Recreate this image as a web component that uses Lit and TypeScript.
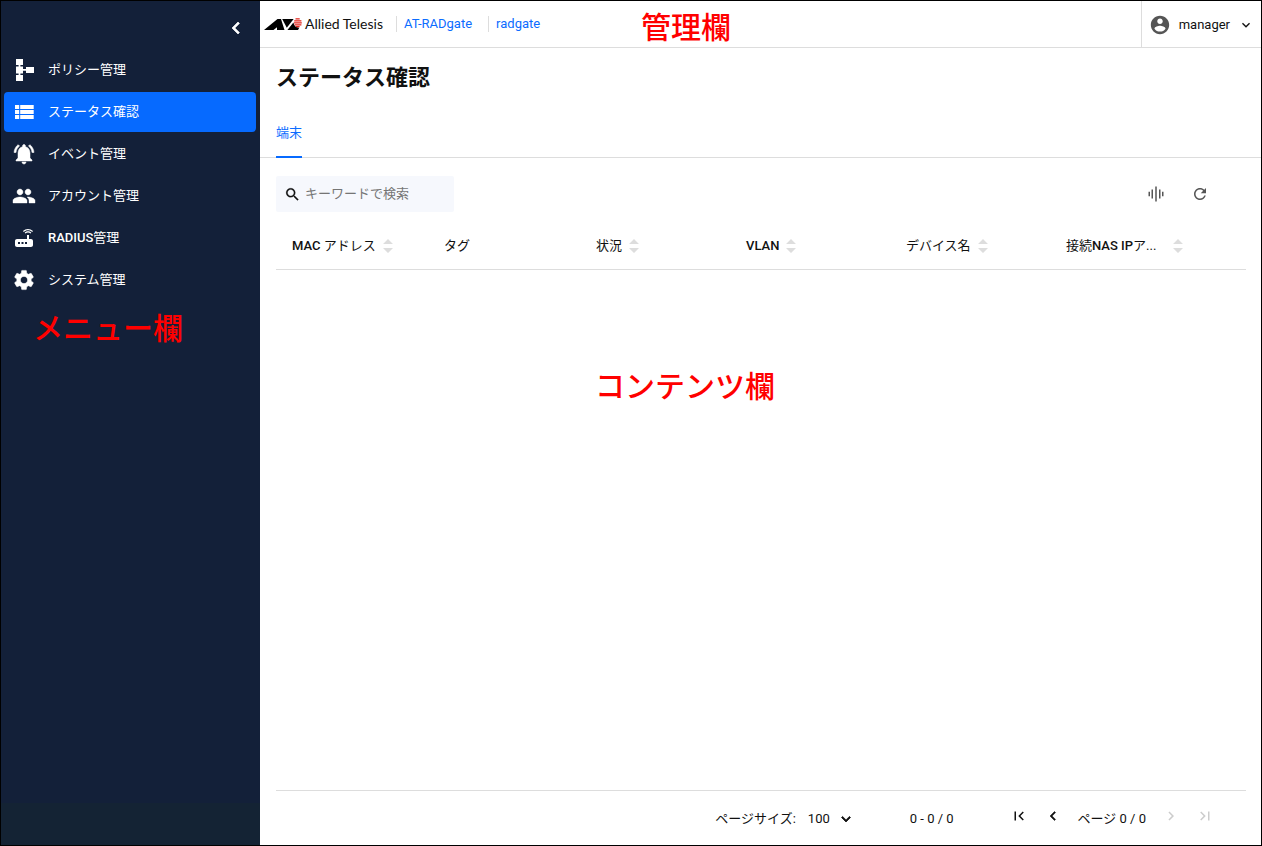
import { LitElement, html, css, svg, nothing } from "lit";
import { customElement, property, state } from "lit/decorators.js";
import { classMap } from "lit/directives/class-map.js";

const glyphs = {
  policy: svg`<path d="M4 1h7v6H8.400v1.500H11v2.500h3V9h8v6h-8v-2.200h-3V15.500H8.400V17H11v6H4v-6h2.600v-1.500H4v-7h2.600V7H4z"/>`,
  list: svg`<path d="M3 5h4.200v4H3zM3 10h4.200v4H3zM3 15h4.200v4H3zM8.200 5h13.500v4H8.200zM8.200 10h13.500v4H8.200zM8.200 15h13.500v4H8.200z"/>`,
  bell: svg`<path stroke="currentColor" stroke-width=".5" d="M7.580 4.080L6.150 2.650C3.750 4.480 2.170 7.300 2.030 10.500h2c.15-2.650 1.510-4.970 3.550-6.420zm12.390 6.420h2c-.15-3.200-1.730-6.020-4.120-7.850l-1.420 1.430c2.020 1.450 3.390 3.770 3.540 6.420zM18 11c0-3.070-1.640-5.640-4.500-6.320V4c0-.83-.67-1.500-1.500-1.500s-1.500.67-1.500 1.500v.68C7.630 5.360 6 7.920 6 11v5l-2 2v1h16v-1l-2-2v-5zm-6 11c.14 0 .27-.01.4-.04.65-.14 1.180-.58 1.440-1.180.1-.24.15-.5.15-.78h-4c.01 1.100.9 2 2.010 2z"/>`,
  people: svg`<path stroke="currentColor" stroke-width=".4" d="M16 11c1.660 0 2.990-1.340 2.990-3S17.660 5 16 5c-1.660 0-3 1.340-3 3s1.340 3 3 3zm-8 0c1.660 0 2.990-1.340 2.990-3S9.660 5 8 5C6.340 5 5 6.340 5 8s1.340 3 3 3zm0 2c-2.330 0-7 1.170-7 3.500V19h14v-2.500c0-2.330-4.670-3.500-7-3.500zm8 0c-.29 0-.62.02-.97.05 1.160.84 1.970 1.970 1.970 3.450V19h6v-2.500c0-2.330-4.670-3.500-7-3.500z"/>`,
  router: svg`<path d="M20.200 5.900l.8-.8C19.600 3.700 17.800 3 16 3s-3.600.7-5 2.100l.8.8C13 4.800 14.500 4.200 16 4.200s3 .6 4.200 1.700zm-.9.8c-.9-.9-2.100-1.400-3.300-1.400s-2.400.5-3.300 1.400l.8.8c.7-.7 1.600-1 2.500-1 .9 0 1.800.3 2.500 1l.8-.8zM19 13h-2V9h-2v4H5c-1.100 0-2 .9-2 2v4c0 1.100.9 2 2 2h14c1.100 0 2-.9 2-2v-4c0-1.100-.9-2-2-2zM8 18H6v-2h2v2zm3.500 0h-2v-2h2v2zm3.500 0h-2v-2h2v2z"/>`,
  gear: svg`<path stroke="currentColor" stroke-width=".5" d="M19.140 12.940c.04-.3.06-.61.06-.94 0-.32-.02-.64-.07-.94l2.030-1.580c.18-.14.23-.41.12-.61l-1.920-3.320c-.12-.22-.37-.29-.59-.22l-2.390.96c-.5-.38-1.030-.7-1.620-.94l-.36-2.540c-.04-.24-.24-.41-.48-.41h-3.840c-.24 0-.43.17-.47.41l-.36 2.540c-.59.24-1.130.57-1.620.94l-2.390-.96c-.22-.08-.47 0-.59.22L2.740 8.870c-.12.21-.08.47.12.61l2.030 1.580c-.05.3-.09.63-.09.94s.02.64.07.94l-2.030 1.580c-.18.14-.23.41-.12.61l1.920 3.320c.12.22.37.29.59.22l2.390-.96c.5.38 1.030.7 1.620.94l.36 2.540c.05.24.24.41.48.41h3.840c.24 0 .44-.17.47-.41l.36-2.540c.59-.24 1.130-.56 1.620-.94l2.390.96c.22.08.47 0 .59-.22l1.920-3.320c.12-.22.07-.47-.12-.61l-2.010-1.580zM12 15.600c-1.980 0-3.600-1.620-3.600-3.600s1.620-3.600 3.600-3.600 3.600 1.620 3.600 3.600-1.620 3.600-3.600 3.600z"/>`,
  left: svg`<path stroke="currentColor" stroke-width=".7" d="M15.410 7.410L14 6l-6 6 6 6 1.410-1.410L10.830 12z"/>`,
  right: svg`<path d="M8.590 16.590L10 18l6-6-6-6-1.410 1.410L13.170 12z"/>`,
  first: svg`<path d="M18.410 16.590L13.820 12l4.590-4.590L17 6l-6 6 6 6zM6 6h2v12H6z"/>`,
  last: svg`<path d="M5.590 7.410L10.180 12l-4.590 4.590L7 18l6-6-6-6zM16 6h2v12h-2z"/>`,
  down: svg`<path d="M7.410 8.590L12 13.170l4.590-4.580L18 10l-6 6-6-6z"/>`,
  pick: svg`<path stroke="currentColor" stroke-width="1" d="M7.410 8.590L12 13.170l4.590-4.580L18 10l-6 6-6-6z"/>`,
  user: svg`<path d="M12 2C6.480 2 2 6.480 2 12s4.480 10 10 10 10-4.480 10-10S17.520 2 12 2zm0 3c1.660 0 3 1.340 3 3s-1.340 3-3 3-3-1.340-3-3 1.340-3 3-3zm0 14.200c-2.500 0-4.710-1.280-6-3.220.03-1.990 4-3.080 6-3.080 1.990 0 5.970 1.090 6 3.080-1.290 1.940-3.500 3.220-6 3.220z"/>`,
  search: svg`<path stroke="currentColor" stroke-width=".3" d="M15.500 14h-.79l-.28-.27C15.410 12.590 16 11.110 16 9.500 16 5.910 13.090 3 9.500 3S3 5.910 3 9.500 5.910 16 9.500 16c1.610 0 3.090-.59 4.230-1.570l.27.28v.79l5 4.990L20.490 19l-4.990-5zm-6 0C7.010 14 5 11.990 5 9.500S7.010 5 9.500 5 14 7.010 14 9.500 11.990 14 9.500 14z"/>`,
  columns: svg`<path d="M2 9h2v6H2zM6 6h2v12H6zM11 2h2v20h-2zM16 6h2v12h-2zM20 9h2v6h-2z"/>`,
  refresh: svg`<path d="M17.650 6.350C16.200 4.900 14.210 4 12 4c-4.420 0-7.990 3.580-7.990 8s3.570 8 7.990 8c3.730 0 6.840-2.550 7.730-6h-2.080c-.82 2.330-3.040 4-5.650 4-3.310 0-6-2.690-6-6s2.690-6 6-6c1.660 0 3.140.69 4.220 1.780L13 11h7V4l-2.350 2.350z"/>`,
};
type Glyph = keyof typeof glyphs;

@customElement("ui-icon")
class UiIcon extends LitElement {
  @property() name: Glyph = "list";
  static styles = css`
    :host { display: inline-flex; flex: none; width: 24px; height: 24px; }
    .glyph { width: 100%; height: 100%; fill: currentColor; display: block; }
  `;
  render() {
    return html`<svg class="glyph" viewBox="0 0 24 24" aria-hidden="true">${glyphs[this.name]}</svg>`;
  }
}

@customElement("brand-logo")
class BrandLogo extends LitElement {
  static styles = css`
    :host { display: flex; align-items: center; height: 20px; width: 120px; }
    .mark { width: 38px; height: 14px; flex: none; }
    .name { font: 400 14px/20px Lato, "Liberation Sans", sans-serif; color: #111; padding-left: 3px; white-space: nowrap; }
  `;
  render() {
    return html`
      <svg class="mark" viewBox="0 0 38 14" aria-hidden="true">
        <path fill="#000" d="M0 13 13.500 2H17L20.500 13H13V10.300L9.500 13z"/>
        <path fill="#000" d="M18.200 2H29.600L22.800 10.800z"/>
        <path fill="#000" d="M23.400 13 29.400 5.600c.6 3.400 2.900 5.200 5.900 5.200L34 13z"/>
        <g fill="none" stroke="#e2231a" stroke-width="1.300">
          <path d="M31.500 1.800h4.200M30.200 3.800h7.200M30 5.800h7.800M30.600 7.800h6.800M32 9.700h3.600"/>
        </g>
      </svg>
      <span class="name">Allied Telesis</span>`;
  }
}

interface Column { label: string; sortable: boolean; cls: string }

/* Latin runs are set in medium weight, Japanese runs stay regular. */
const mixed = (text: string) =>
  text.split(/([A-Za-z]+)/).map((run) => (/^[A-Za-z]/.test(run) ? html`<span class="latin">${run}</span>` : run));

@customElement("app-root")
class AppRoot extends LitElement {
  @state() private current = 1;
  @state() private columns: Column[] = [
    { label: "MAC アドレス", sortable: true, cls: "c-mac" },
    { label: "タグ", sortable: false, cls: "c-tag" },
    { label: "状況", sortable: true, cls: "c-state" },
    { label: "VLAN", sortable: true, cls: "c-vlan" },
    { label: "デバイス名", sortable: true, cls: "c-device" },
    { label: "接続NAS IPア...", sortable: true, cls: "c-nas" },
  ];
  private menu: { icon: Glyph; label: string }[] = [
    { icon: "policy", label: "ポリシー管理" },
    { icon: "list", label: "ステータス確認" },
    { icon: "bell", label: "イベント管理" },
    { icon: "people", label: "アカウント管理" },
    { icon: "router", label: "RADIUS管理" },
    { icon: "gear", label: "システム管理" },
  ];

  static styles = css`
    :host {
      display: block; position: relative; color: #111;
      font: 400 13px/20px Roboto, "Noto Sans CJK JP", sans-serif;
    }
    * { box-sizing: border-box; }
    button, input, select { font: inherit; color: inherit; border: 0; background: none; padding: 0; margin: 0; }
    button { cursor: pointer; }
    a { color: #0b6cff; text-decoration: none; }
    .latin { font-weight: 500; }
    .shell { display: grid; grid-template-columns: 259px minmax(0, 1fr); min-height: 100vh; border: 1px solid #000; background: #fff; }

    .side { background: linear-gradient(#132039 0, #132039 calc(100% - 42px), #142334 calc(100% - 42px)); color: #fff; padding: 3px 4px 3px 3px; }
    .collapse { display: flex; justify-content: flex-end; height: 46px; align-items: center; padding: 2px 8px 0 0; }
    .collapse button { display: flex; }
    .menu { list-style: none; margin: 0; padding: 0; display: grid; gap: 2px; }
    .entry { display: flex; align-items: center; gap: 12px; height: 40px; padding: 0 8px; border-radius: 4px; color: #fff; }
    .entry.on { background: #066aff; }

    .main { display: flex; flex-direction: column; min-width: 0; }
    .bar { display: flex; align-items: center; height: 47px; border-bottom: 1px solid #ddd; padding-left: 4px; }
    .crumbs { display: flex; gap: 16px; margin-left: 12px; }
    .crumbs a { border-left: 1px solid #ddd; padding-left: 7px; line-height: 16px; }
    .user { margin-left: auto; align-self: stretch; display: flex; align-items: center; border-left: 1px solid #ddd; padding: 2px 7px 0; }
    .user .who { width: 22px; height: 22px; color: #555; }
    .user .name { padding: 0 8px; }
    .user .arrow { width: 16px; height: 16px; }

    h1 { font-size: 22px; line-height: 32px; font-weight: 700; margin: 0; padding: 14px 16px 0; }
    .tabs { display: flex; padding: 28px 16px 0; border-bottom: 1px solid #ddd; }
    .tab { color: #0b6cff; height: 36px; padding-bottom: 12px; border-bottom: 2px solid #066aff; margin-bottom: -1px; }

    .tools { display: flex; align-items: center; padding: 18px 43px 0 16px; }
    .search { display: flex; align-items: center; gap: 4px; width: 178px; height: 36px; padding: 0 8px; background: #f6f8fd; border-radius: 2px; }
    .search ui-icon { width: 17px; height: 17px; }
    .search input { flex: 1; min-width: 0; outline: 0; }
    .search input::placeholder { color: #757575; opacity: 1; }
    .acts { margin-left: auto; display: flex; gap: 8px; }
    .act { width: 36px; height: 36px; display: grid; place-items: center; color: #555; }
    .act ui-icon { width: 18px; height: 18px; }

    .grid { flex: 1; margin: 0 15px 0 16px; border-bottom: 1px solid #ddd; }
    table { width: 100%; table-layout: fixed; border-collapse: collapse; }
    th { height: 57px; padding: 11px 0 0 16px; font-weight: 400; text-align: left; border-bottom: 1px solid #ddd; }
    .c-mac, .c-tag { width: 152px; }
    .c-state { width: 150px; }
    .c-vlan, .c-device { width: 160px; }
    .head { display: flex; align-items: center; gap: 6px; white-space: nowrap; }
    .c-nas .text { min-width: 100px; }
    .sort { width: 12px; height: 16px; fill: #ddd; display: block; }

    .foot { display: flex; align-items: center; justify-content: flex-end; gap: 48px; height: 54px; padding: 2px 39px 0 0; }
    .size { display: flex; align-items: center; gap: 12px; }
    .pick { display: flex; align-items: center; width: 54px; }
    .pick select { appearance: none; width: 54px; margin-right: -25px; outline: 0; }
    .pick ui-icon { width: 18px; height: 18px; pointer-events: none; }
    .pager { display: flex; align-items: center; }
    .step { width: 34px; height: 34px; padding-bottom: 6px; display: grid; place-items: center; }
    .step ui-icon { width: 18px; height: 18px; }
    .step:disabled { color: #ccc; cursor: default; }
    .page { padding: 0 8px; }

    .note { position: absolute; color: #f00; font-size: 30px; line-height: 40px; font-weight: 500; white-space: nowrap; pointer-events: none; }
    .note-bar { left: 641px; top: 8px; }
    .note-menu { left: 33px; top: 309px; }
    .note-body { left: 595px; top: 367px; }
  `;

  private heading(c: Column) {
    return html`<th class=${c.cls} scope="col">
      <div class="head"><span class="text">${mixed(c.label)}</span>
        ${c.sortable
          ? html`<button aria-label="${c.label} 並べ替え"><svg class="sort" viewBox="0 0 12 16"><path d="M6 1l5 5H1zM6 15l5-5H1z"/></svg></button>`
          : nothing}
      </div>
    </th>`;
  }

  render() {
    return html`
      <div class="shell">
        <aside class="side">
          <div class="collapse"><button aria-label="メニューを閉じる"><ui-icon name="left"></ui-icon></button></div>
          <nav>
            <ul class="menu">
              ${this.menu.map((m, i) => html`<li>
                <a href="#" class=${classMap({ entry: true, on: i === this.current })}
                  @click=${(e: Event) => { e.preventDefault(); this.current = i; }}>
                  <ui-icon name=${m.icon}></ui-icon><span>${mixed(m.label)}</span></a></li>`)}
            </ul>
          </nav>
        </aside>
        <div class="main">
          <header class="bar">
            <brand-logo></brand-logo>
            <nav class="crumbs"><a href="#">AT-RADgate</a><a href="#">radgate</a></nav>
            <button class="user">
              <ui-icon class="who" name="user"></ui-icon><span class="name">manager</span><ui-icon class="arrow" name="down"></ui-icon>
            </button>
          </header>
          <h1>ステータス確認</h1>
          <div class="tabs" role="tablist"><button class="tab" role="tab" aria-selected="true">端末</button></div>
          <div class="tools">
            <label class="search"><ui-icon name="search"></ui-icon>
              <input type="text" aria-label="キーワードで検索" placeholder="キーワードで検索"></label>
            <div class="acts">
              <button class="act" aria-label="列の設定"><ui-icon name="columns"></ui-icon></button>
              <button class="act" aria-label="更新"><ui-icon name="refresh"></ui-icon></button>
            </div>
          </div>
          <div class="grid">
            <table><thead><tr>${this.columns.map((c) => this.heading(c))}</tr></thead><tbody></tbody></table>
          </div>
          <footer class="foot">
            <div class="size">
              <label for="size">ページサイズ:</label>
              <span class="pick"><select id="size"><option>100</option></select><ui-icon name="pick"></ui-icon></span>
            </div>
            <span>0 - 0 / 0</span>
            <div class="pager">
              <button class="step" aria-label="最初のページ"><ui-icon name="first"></ui-icon></button>
              <button class="step" aria-label="前のページ"><ui-icon name="left"></ui-icon></button>
              <span class="page">ページ 0 / 0</span>
              <button class="step" aria-label="次のページ" disabled><ui-icon name="right"></ui-icon></button>
              <button class="step" aria-label="最後のページ" disabled><ui-icon name="last"></ui-icon></button>
            </div>
          </footer>
        </div>
      </div>
      <span class="note note-bar">管理欄</span>
      <span class="note note-menu">メニュー欄</span>
      <span class="note note-body">コンテンツ欄</span>
    `;
  }
}
